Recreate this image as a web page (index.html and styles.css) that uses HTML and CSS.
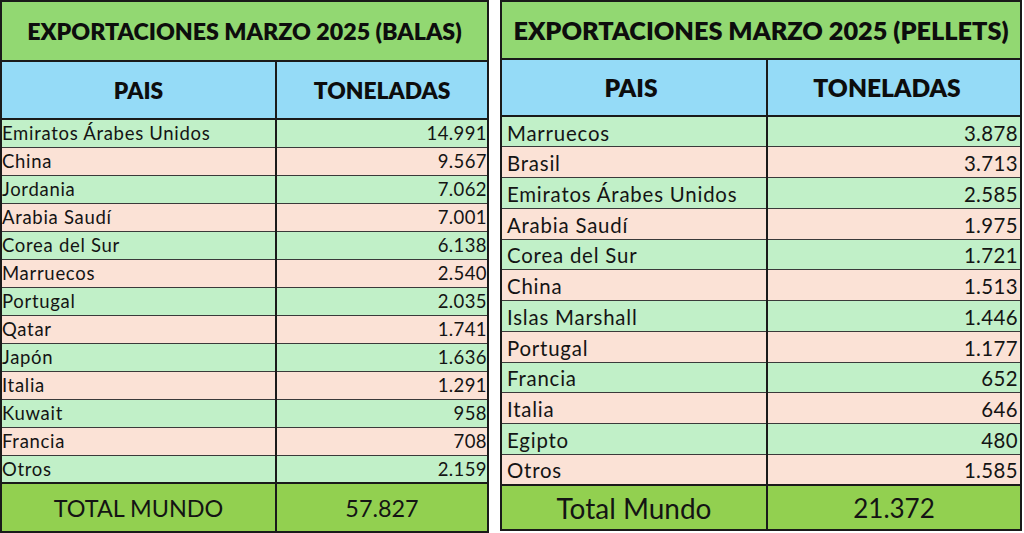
FILE: index.html
```html
<!DOCTYPE html>
<html lang="es">
<head>
<meta charset="utf-8">
<title>Exportaciones marzo 2025</title>
<link rel="stylesheet" href="styles.css">
</head>
<body>
<div class="page">
  <table class="tbl balas">
    <colgroup><col class="c1"><col class="c2"></colgroup>
    <thead>
      <tr class="title"><th colspan="2">EXPORTACIONES MARZO 2025 (BALAS)</th></tr>
      <tr class="head"><th>PAIS</th><th>TONELADAS</th></tr>
    </thead>
    <tbody>
      <tr class="g"><td>Emiratos Árabes Unidos</td><td class="n">14.991</td></tr>
      <tr class="p"><td>China</td><td class="n">9.567</td></tr>
      <tr class="g"><td>Jordania</td><td class="n">7.062</td></tr>
      <tr class="p"><td>Arabia Saudí</td><td class="n">7.001</td></tr>
      <tr class="g"><td>Corea del Sur</td><td class="n">6.138</td></tr>
      <tr class="p"><td>Marruecos</td><td class="n">2.540</td></tr>
      <tr class="g"><td>Portugal</td><td class="n">2.035</td></tr>
      <tr class="p"><td>Qatar</td><td class="n">1.741</td></tr>
      <tr class="g"><td>Japón</td><td class="n">1.636</td></tr>
      <tr class="p"><td>Italia</td><td class="n">1.291</td></tr>
      <tr class="g"><td>Kuwait</td><td class="n">958</td></tr>
      <tr class="p"><td>Francia</td><td class="n">708</td></tr>
      <tr class="g last"><td>Otros</td><td class="n">2.159</td></tr>
    </tbody>
    <tfoot>
      <tr class="total"><td>TOTAL MUNDO</td><td class="tn">57.827</td></tr>
    </tfoot>
  </table>

  <table class="tbl pellets">
    <colgroup><col class="c1"><col class="c2"></colgroup>
    <thead>
      <tr class="title"><th colspan="2">EXPORTACIONES MARZO 2025 (PELLETS)</th></tr>
      <tr class="head"><th>PAIS</th><th>TONELADAS</th></tr>
    </thead>
    <tbody>
      <tr class="g"><td>Marruecos</td><td class="n">3.878</td></tr>
      <tr class="p"><td>Brasil</td><td class="n">3.713</td></tr>
      <tr class="g"><td>Emiratos Árabes Unidos</td><td class="n">2.585</td></tr>
      <tr class="p"><td>Arabia Saudí</td><td class="n">1.975</td></tr>
      <tr class="g"><td>Corea del Sur</td><td class="n">1.721</td></tr>
      <tr class="p"><td>China</td><td class="n">1.513</td></tr>
      <tr class="g"><td>Islas Marshall</td><td class="n">1.446</td></tr>
      <tr class="p"><td>Portugal</td><td class="n">1.177</td></tr>
      <tr class="g"><td>Francia</td><td class="n">652</td></tr>
      <tr class="p"><td>Italia</td><td class="n">646</td></tr>
      <tr class="g"><td>Egipto</td><td class="n">480</td></tr>
      <tr class="p last"><td>Otros</td><td class="n">1.585</td></tr>
    </tbody>
    <tfoot>
      <tr class="total"><td>Total Mundo</td><td class="tn">21.372</td></tr>
    </tfoot>
  </table>
</div>
</body>
</html>
```
FILE: styles.css
```css
html, body {
  margin: 0;
  padding: 0;
  background: #ffffff;
}
body {
  font-family: Lato, "Open Sans", sans-serif;
  color: #141414;
}
.page {
  display: flex;
  align-items: flex-start;
  gap: 11px;
  width: 1024px;
  height: 533px;
}
.tbl {
  border-collapse: collapse;
  table-layout: fixed;
  border: 2px solid #1a1a1a;
}
.balas { width: 489px; }
.balas .c1 { width: 275px; }
.pellets { width: 522px; }
.pellets .c1 { width: 266px; }

.tbl th, .tbl td {
  padding: 0;
  overflow: hidden;
  white-space: nowrap;
}
.title th {
  background: #92d872;
  font-weight: 800;
  text-align: center;
  border-bottom: 2px solid #1a1a1a;
  color: #0d0d0d;
}
.balas .title th { height: 58px; font-size: 23.2px; }
.pellets .title th { height: 56px; font-size: 25.3px; }

.head th {
  background: #95dbf7;
  font-weight: 800;
  text-align: center;
  border-bottom: 2px solid #1a1a1a;
  color: #0d0d0d;
}
.head th:first-child { border-right: 2px solid #1a1a1a; }
.balas .head th { height: 56px; font-size: 22.8px; }
.pellets .head th { height: 55px; font-size: 24.6px; }
.pellets .head th:first-child { padding-right: 6px; }
.pellets .head th:last-child { padding-right: 14px; }

tbody td {
  border-bottom: 1px solid #3a3a3a;
  vertical-align: middle;
  padding: 1px 3px 0 6px;
  letter-spacing: 0.7px;
  line-height: 20px;
}
tbody td:first-child { border-right: 2px solid #1a1a1a; }
tbody td.n { text-align: right; letter-spacing: 0.4px; }
tbody tr.last td { border-bottom: 2px solid #1a1a1a; }
.g td { background: #c1f0c8; }
.p td { background: #fbe2d6; }
.balas tbody tr { height: 28px; }
.balas tbody td { font-size: 18.5px; }
.pellets tbody tr { height: 30.75px; }
.pellets tbody td { font-size: 20.4px; padding: 2px 2px 0 5px; letter-spacing: 0.8px; line-height: 22px; }
.pellets tbody td.n { letter-spacing: 0.4px; }

.total td {
  background: #92d050;
  text-align: center;
  font-weight: 400;
}
.total td:first-child { border-right: 2px solid #1a1a1a; }
.balas .total td { height: 47px; font-size: 23.4px; }
.pellets .total td { height: 43px; font-size: 28px; }
.pellets .total td.tn { font-size: 26px; }
```
